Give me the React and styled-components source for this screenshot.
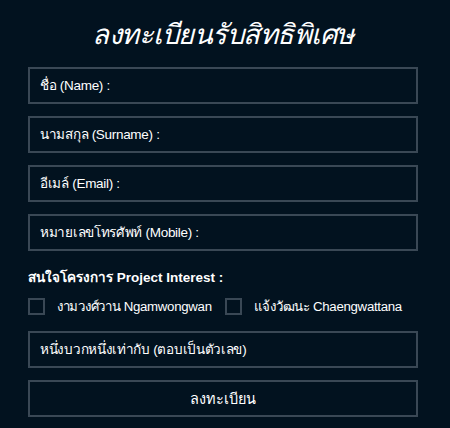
import React from "react";
import styled, { createGlobalStyle } from "styled-components";

const GlobalStyle = createGlobalStyle`
    html, body {
        margin: 0;
        padding: 0;
        background-color: #02121f;
    }
    body {
        font-family: "Liberation Sans", "Noto Sans", Arial, sans-serif;
        color: #ffffff;
    }
`;

const Page = styled.div`
    width: 450px;
    height: 428px;
    box-sizing: border-box;
    padding: 14px 32px 0 28px;
    background-color: #02121f;
`;

const Title = styled.h1`
    margin: 0 0 13px;
    height: 40px;
    line-height: 40px;
    text-align: center;
    font-family: "Noto Sans", sans-serif;
    font-size: 27.5px;
    font-weight: 400;
    font-style: italic;
    letter-spacing: -0.5px;
    color: #ffffff;
`;

const Form = styled.form`
    display: flex;
    flex-direction: column;
    gap: 12px;
`;

const Field = styled.input`
    box-sizing: border-box;
    width: 390px;
    height: 37px;
    margin: 0;
    padding: 0 10px;
    border: 2px solid #3a4855;
    background-color: transparent;
    color: #ffffff;
    font-family: inherit;
    font-size: 13.5px;
    letter-spacing: -0.3px;
    outline: none;

    &::placeholder {
        color: #ffffff;
        opacity: 1;
    }
`;

const Group = styled.div`
    display: flex;
    flex-direction: column;
    gap: 9px;
    margin-top: 6px;
`;

const GroupLabel = styled.div`
    font-size: 13.5px;
    font-weight: 700;
    line-height: 18px;
`;

const Options = styled.div`
    display: flex;
    align-items: center;
    gap: 13px;
    margin-bottom: 2px;
`;

const Option = styled.label`
    display: flex;
    align-items: center;
    gap: 12px;
    font-size: 13.25px;
    letter-spacing: -0.3px;
    cursor: pointer;
`;

const Box = styled.span`
    display: inline-block;
    box-sizing: border-box;
    width: 17px;
    height: 17px;
    border: 2px solid #3a4855;
`;

const Submit = styled.button`
    box-sizing: border-box;
    width: 390px;
    height: 37px;
    margin: 0;
    border: 2px solid #3a4855;
    background-color: transparent;
    color: #ffffff;
    font-family: inherit;
    font-size: 14.5px;
    cursor: pointer;
`;

const fields = [
    "ชื่อ (Name) :",
    "นามสกุล (Surname) :",
    "อีเมล์ (Email) :",
    "หมายเลขโทรศัพท์ (Mobile) :",
];

const projects = ["งามวงศ์วาน Ngamwongwan", "แจ้งวัฒนะ Chaengwattana"];

const App = () => {
    return (
        <>
            <GlobalStyle />
            <Page>
                <Title>ลงทะเบียนรับสิทธิพิเศษ</Title>
                <Form onSubmit={(e) => e.preventDefault()}>
                    {fields.map((f) => (
                        <Field key={f} placeholder={f} />
                    ))}
                    <Group>
                        <GroupLabel>สนใจโครงการ Project Interest :</GroupLabel>
                        <Options>
                            {projects.map((p) => (
                                <Option key={p}>
                                    <Box />
                                    {p}
                                </Option>
                            ))}
                        </Options>
                    </Group>
                    <Field placeholder="หนึ่งบวกหนึ่งเท่ากับ (ตอบเป็นตัวเลข)" />
                    <Submit type="submit">ลงทะเบียน</Submit>
                </Form>
            </Page>
        </>
    );
};

export default App;
